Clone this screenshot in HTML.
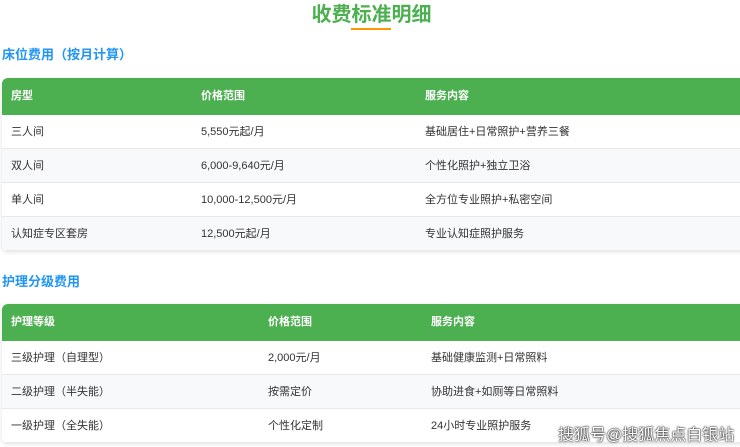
<!DOCTYPE html>
<html><head><meta charset="utf-8"><style>
*{margin:0;padding:0;box-sizing:border-box}
body{width:740px;height:447px;overflow:hidden;background:#fff;font-family:"Liberation Sans","Noto Sans CJK SC",sans-serif;position:relative}
.t{position:absolute;left:0;width:743px;text-align:center;top:-2px;font-size:20px;font-weight:bold;color:#4caf50}
.line{position:absolute;left:351px;top:28px;width:40px;height:2px;background:#ff9800}
.h{position:absolute;left:2px;font-size:13px;font-weight:bold;color:#2196f3}
.tb{position:absolute;left:2px;width:746px;border-radius:6px;overflow:hidden;box-shadow:0 1px 4px rgba(0,0,0,.12);font-size:11px;color:#333}
.r{height:34px;line-height:34px;position:relative;border-bottom:1px solid #e8e8e8;background:#fff}
.r:nth-child(odd){background:#f8f9fa}
.hd{height:37px;line-height:37px;background:#4caf50;color:#fff;font-weight:bold;position:relative}
.r span,.hd span{position:absolute;top:0}
.wm{position:absolute;left:558px;top:421px;font-size:16px;color:#fff;text-shadow:0 0 2px #000,0 0 1px #000;letter-spacing:0}
</style></head><body>
<div class="t">收费标准明细</div>
<div class="line"></div>
<div class="h" style="top:44px">床位费用（按月计算）</div>
<div class="tb" style="top:78px">
<div class="hd"><span style="left:9px">房型</span><span style="left:199px">价格范围</span><span style="left:423px">服务内容</span></div>
<div class="r"><span style="left:9px">三人间</span><span style="left:199px">5,550元起/月</span><span style="left:423px">基础居住+日常照护+营养三餐</span></div>
<div class="r"><span style="left:9px">双人间</span><span style="left:199px">6,000-9,640元/月</span><span style="left:423px">个性化照护+独立卫浴</span></div>
<div class="r"><span style="left:9px">单人间</span><span style="left:199px">10,000-12,500元/月</span><span style="left:423px">全方位专业照护+私密空间</span></div>
<div class="r"><span style="left:9px">认知症专区套房</span><span style="left:199px">12,500元起/月</span><span style="left:423px">专业认知症照护服务</span></div>
</div>
<div class="h" style="top:271px">护理分级费用</div>
<div class="tb" style="top:304px">
<div class="hd"><span style="left:9px">护理等级</span><span style="left:266px">价格范围</span><span style="left:429px">服务内容</span></div>
<div class="r"><span style="left:9px">三级护理（自理型）</span><span style="left:266px">2,000元/月</span><span style="left:429px">基础健康监测+日常照料</span></div>
<div class="r"><span style="left:9px">二级护理（半失能）</span><span style="left:266px">按需定价</span><span style="left:429px">协助进食+如厕等日常照料</span></div>
<div class="r"><span style="left:9px">一级护理（全失能）</span><span style="left:266px">个性化定制</span><span style="left:429px">24小时专业照护服务</span></div>
</div>
<div class="wm">搜狐号@搜狐焦点白银站</div>
</body></html>
